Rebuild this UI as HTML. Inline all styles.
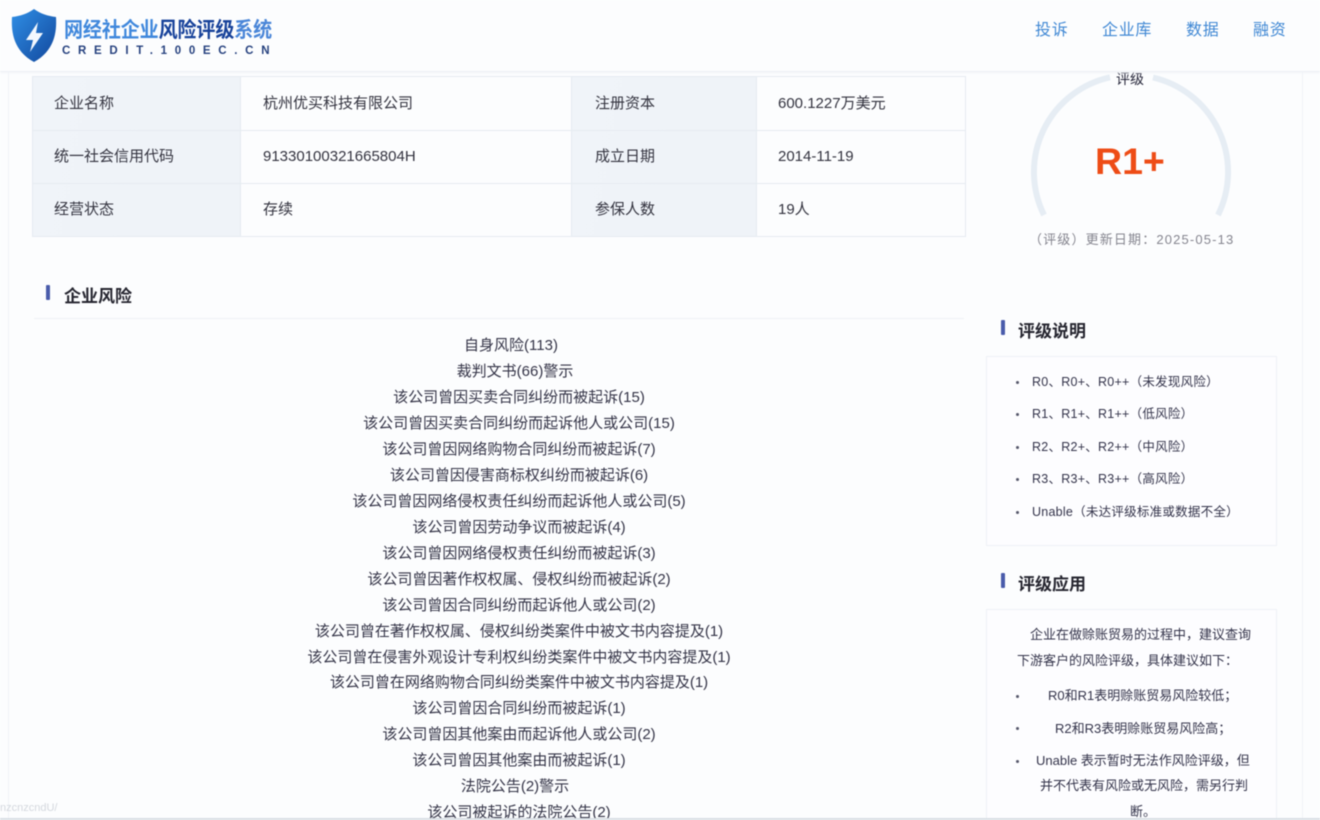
<!DOCTYPE html>
<html lang="zh-CN">
<head>
<meta charset="utf-8">
<title>网经社企业风险评级系统</title>
<style>
*{margin:0;padding:0;box-sizing:border-box}
html,body{width:1320px;height:820px;overflow:hidden;background:#fff}
body{font-family:"Liberation Sans","Noto Sans CJK SC",sans-serif;color:#33333f;position:relative}
#wrap{position:absolute;left:0;top:0;width:1320px;height:820px;overflow:hidden;background:#fcfdfe;filter:blur(.55px)}
.a{position:absolute;white-space:nowrap}
.vl{position:absolute;top:72px;bottom:0;width:1px;background:#f0f3f8}
#hd{position:absolute;left:0;top:0;width:1320px;height:72px;background:#fcfdfe;border-bottom:1px solid #eef1f5;box-shadow:0 1px 2px #f3f5f8}
.nav{position:absolute;top:20px;font-size:16px;line-height:22px;letter-spacing:.7px;color:#4088d4}
.cell{position:absolute;font-size:15px;line-height:20px;color:#33333f;white-space:nowrap}
.th{position:absolute;background:linear-gradient(100deg,#f0f4f9,#eff3f8)}
.ln{position:absolute;background:#e6ebf1}
.bar{position:absolute;width:4px;height:15px;background:#4a5cab;border-radius:1px}
.h{position:absolute;font-size:17px;line-height:22px;font-weight:bold;color:#25252f;white-space:nowrap}
.r{position:absolute;font-size:15px;line-height:20px;white-space:nowrap;transform:translateX(-50%);color:#343447}
.box{position:absolute;left:986px;width:291px;background:#fdfdff;border:1px solid #eef1f6}
.s{position:absolute;font-size:12.5px;line-height:18px;white-space:nowrap;color:#33334a;letter-spacing:.25px}
.p{position:absolute;font-size:13px;line-height:18px;white-space:nowrap;color:#33334a}
.dot{position:absolute;width:3px;height:3px;border-radius:50%;background:#55566a}
</style>
</head>
<body>
<div id="wrap">
  <div class="vl" style="left:8px"></div>
  <div class="vl" style="left:1302px"></div>

  <!-- info table -->
  <div class="th" style="left:32px;top:77px;width:208px;height:159px"></div>
  <div class="th" style="left:571px;top:77px;width:185px;height:159px"></div>
  <div class="ln" style="left:32px;top:76px;width:934px;height:1px"></div>
  <div class="ln" style="left:32px;top:130px;width:934px;height:1px"></div>
  <div class="ln" style="left:32px;top:183px;width:934px;height:1px"></div>
  <div class="ln" style="left:32px;top:236px;width:934px;height:1px"></div>
  <div class="ln" style="left:32px;top:76px;width:1px;height:161px"></div>
  <div class="ln" style="left:240px;top:76px;width:1px;height:161px"></div>
  <div class="ln" style="left:571px;top:76px;width:1px;height:161px"></div>
  <div class="ln" style="left:756px;top:76px;width:1px;height:161px"></div>
  <div class="ln" style="left:965px;top:76px;width:1px;height:161px"></div>

  <div class="cell" style="left:54px;top:94px">企业名称</div>
  <div class="cell" style="left:263px;top:94px">杭州优买科技有限公司</div>
  <div class="cell" style="left:595px;top:94px">注册资本</div>
  <div class="cell" style="left:778px;top:94px">600.1227万美元</div>
  <div class="cell" style="left:54px;top:147px">统一社会信用代码</div>
  <div class="cell" style="left:263px;top:147px">91330100321665804H</div>
  <div class="cell" style="left:595px;top:147px">成立日期</div>
  <div class="cell" style="left:778px;top:147px">2014-11-19</div>
  <div class="cell" style="left:54px;top:200px">经营状态</div>
  <div class="cell" style="left:263px;top:200px">存续</div>
  <div class="cell" style="left:595px;top:200px">参保人数</div>
  <div class="cell" style="left:778px;top:200px">19人</div>

  <!-- risk section -->
  <div class="bar" style="left:46px;top:285px"></div>
  <div class="h" style="left:64px;top:286px">企业风险</div>
  <div class="ln" style="left:34px;top:318px;width:930px;height:1px;background:#eef1f5"></div>

  <div class="r" style="left:511px;top:336px">自身风险(113)</div>
  <div class="r" style="left:515px;top:362px">裁判文书(66)警示</div>
  <div class="r" style="left:519px;top:388px">该公司曾因买卖合同纠纷而被起诉(15)</div>
  <div class="r" style="left:519px;top:414px">该公司曾因买卖合同纠纷而起诉他人或公司(15)</div>
  <div class="r" style="left:519px;top:440px">该公司曾因网络购物合同纠纷而被起诉(7)</div>
  <div class="r" style="left:519px;top:466px">该公司曾因侵害商标权纠纷而被起诉(6)</div>
  <div class="r" style="left:519px;top:492px">该公司曾因网络侵权责任纠纷而起诉他人或公司(5)</div>
  <div class="r" style="left:519px;top:518px">该公司曾因劳动争议而被起诉(4)</div>
  <div class="r" style="left:519px;top:544px">该公司曾因网络侵权责任纠纷而被起诉(3)</div>
  <div class="r" style="left:519px;top:570px">该公司曾因著作权权属、侵权纠纷而被起诉(2)</div>
  <div class="r" style="left:519px;top:596px">该公司曾因合同纠纷而起诉他人或公司(2)</div>
  <div class="r" style="left:519px;top:622px">该公司曾在著作权权属、侵权纠纷类案件中被文书内容提及(1)</div>
  <div class="r" style="left:519px;top:648px">该公司曾在侵害外观设计专利权纠纷类案件中被文书内容提及(1)</div>
  <div class="r" style="left:519px;top:673px">该公司曾在网络购物合同纠纷类案件中被文书内容提及(1)</div>
  <div class="r" style="left:519px;top:699px">该公司曾因合同纠纷而被起诉(1)</div>
  <div class="r" style="left:519px;top:725px">该公司曾因其他案由而起诉他人或公司(2)</div>
  <div class="r" style="left:519px;top:751px">该公司曾因其他案由而被起诉(1)</div>
  <div class="r" style="left:515px;top:777px">法院公告(2)警示</div>
  <div class="r" style="left:519px;top:803px">该公司被起诉的法院公告(2)</div>

  <!-- gauge -->
  <svg class="a" style="left:1020px;top:60px" width="222" height="170" viewBox="1020 60 222 170">
    <path d="M1044 215 A97 97 0 0 1 1110 77.3" fill="none" stroke="#e6edf4" stroke-width="6"/>
    <path d="M1153 77.5 A97 97 0 0 1 1218 215" fill="none" stroke="#e6edf4" stroke-width="6"/>
  </svg>
  <div class="a" style="left:1116px;top:70px;font-size:14px;line-height:18px;color:#26263a">评级</div>
  <div class="a" style="left:1095px;top:140px;font-size:37.5px;line-height:42px;font-weight:bold;color:#ee4c16">R1+</div>
  <div class="a" style="left:1029px;top:231px;font-size:13px;line-height:17px;color:#85858f;letter-spacing:1.15px">（评级）更新日期：2025-05-13</div>

  <!-- rating description -->
  <div class="bar" style="left:1001px;top:320px"></div>
  <div class="h" style="left:1018px;top:321px">评级说明</div>
  <div class="box" style="top:356px;height:190px"></div>
  <div class="dot" style="left:1016px;top:381px"></div>
  <div class="s" style="left:1032px;top:373px">R0、R0+、R0++（未发现风险）</div>
  <div class="dot" style="left:1016px;top:413px"></div>
  <div class="s" style="left:1032px;top:405px">R1、R1+、R1++（低风险）</div>
  <div class="dot" style="left:1016px;top:446px"></div>
  <div class="s" style="left:1032px;top:438px">R2、R2+、R2++（中风险）</div>
  <div class="dot" style="left:1016px;top:478px"></div>
  <div class="s" style="left:1032px;top:470px">R3、R3+、R3++（高风险）</div>
  <div class="dot" style="left:1016px;top:511px"></div>
  <div class="s" style="left:1032px;top:503px">Unable（未达评级标准或数据不全）</div>

  <!-- rating use -->
  <div class="bar" style="left:1001px;top:573px"></div>
  <div class="h" style="left:1018px;top:574px">评级应用</div>
  <div class="box" style="top:609px;height:215px"></div>
  <div class="p" style="left:1030px;top:626px">企业在做赊账贸易的过程中，建议查询</div>
  <div class="p" style="left:1017px;top:652px">下游客户的风险评级，具体建议如下：</div>
  <div class="dot" style="left:1016px;top:695px"></div>
  <div class="p" style="left:1048px;top:687px">R0和R1表明赊账贸易风险较低；</div>
  <div class="dot" style="left:1016px;top:727px"></div>
  <div class="p" style="left:1055px;top:720px">R2和R3表明赊账贸易风险高；</div>
  <div class="dot" style="left:1016px;top:760px"></div>
  <div class="p" style="left:1036px;top:752px">Unable 表示暂时无法作风险评级，但</div>
  <div class="p" style="left:1040px;top:777px">并不代表有风险或无风险，需另行判</div>
  <div class="p" style="left:1130px;top:803px">断。</div>

  <!-- faint watermark -->
  <div class="a" style="left:0;top:801px;font-size:11px;line-height:14px;color:#d4d8de">nzcnzcndU/</div>

  <!-- bottom line -->
  <div class="a" style="left:0;top:818px;width:1320px;height:2px;background:#d9dfe5"></div>

  <!-- header -->
  <div id="hd"></div>
  <svg class="a" style="left:10px;top:7px" width="48" height="56" viewBox="0 0 48 56">
    <defs>
      <linearGradient id="sg" x1="0" y1="0" x2="1" y2="1">
        <stop offset="0" stop-color="#2f8fe6"/>
        <stop offset="1" stop-color="#12479c"/>
      </linearGradient>
    </defs>
    <path d="M24 2 C31 7 38 9 46 10 C47 26 44 44 24 55 C4 44 1 26 2 10 C10 9 17 7 24 2 Z" fill="url(#sg)"/>
    <path d="M28 15 L16 33 L23 33 L20 45 L33 26 L26 26 Z" fill="#f3f8fe"/>
  </svg>
  <div class="a" style="left:64px;top:18px;font-size:21px;line-height:26px;font-weight:bold;letter-spacing:-.1px;transform:scaleX(.905);transform-origin:left top">
    <span style="color:#4088dc">网经社企业</span><span style="color:#17429a">风险评级</span><span style="color:#4a86d8">系统</span>
  </div>
  <div class="a" style="left:62px;top:44px;font-size:11.5px;line-height:14px;letter-spacing:7.7px;color:#27427f;font-weight:bold">CREDIT.100EC.CN</div>

  <div class="nav" style="left:1035px">投诉</div>
  <div class="nav" style="left:1102px">企业库</div>
  <div class="nav" style="left:1186px">数据</div>
  <div class="nav" style="left:1253px">融资</div>
</div>
</body>
</html>
